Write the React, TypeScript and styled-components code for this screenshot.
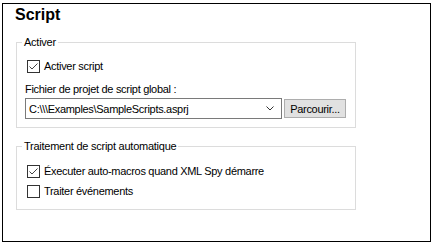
import React from "react";
import styled, { createGlobalStyle } from "styled-components";

const GlobalStyle = createGlobalStyle`
  body {
    margin: 0;
    background: #ffffff;
    font-family: "Liberation Sans", Arial, sans-serif;
    font-size: 11px;
    color: #000000;
  }
`;

const Frame = styled.div`
  box-sizing: border-box;
  width: 429px;
  height: 239px;
  margin: 3px 0 0 2px;
  padding: 1px 0 0 12px;
  border: 1px solid #000000;
  background: #ffffff;
`;

const Title = styled.h1`
  margin: 0;
  height: 20px;
  font-size: 16px;
  line-height: 20px;
  font-weight: 700;
`;

const Group = styled.fieldset<{ $top: number }>`
  box-sizing: border-box;
  width: 340px;
  margin: ${(p) => p.$top}px 0 0 1px;
  padding: 0;
  border: 1px solid #dcdcdc;
  min-inline-size: 0;
`;

const Legend = styled.legend`
  margin-left: 5px;
  padding: 0 2px;
  height: 13px;
  line-height: 13px;
  letter-spacing: -0.25px;
`;

const GroupBody = styled.div<{ $pt: number; $pb: number; $gap: number }>`
  display: flex;
  flex-direction: column;
  gap: ${(p) => p.$gap}px;
  padding: ${(p) => p.$pt}px 0 ${(p) => p.$pb}px 8px;
`;

const CheckRow = styled.label`
  display: flex;
  align-items: center;
  gap: 4px;
  height: 13px;
  margin-left: 2px;
  line-height: 13px;
  letter-spacing: -0.3px;
  white-space: nowrap;
`;

const Box = styled.span`
  box-sizing: border-box;
  display: flex;
  align-items: center;
  justify-content: center;
  width: 13px;
  height: 13px;
  border: 1px solid #333333;
  background: #ffffff;
  flex: none;
`;

const FieldLabel = styled.div`
  height: 13px;
  line-height: 13px;
  margin-top: 10px;
  letter-spacing: -0.3px;
  white-space: nowrap;
`;

const FileRow = styled.div`
  display: flex;
  align-items: center;
  gap: 2px;
  height: 21px;
  margin-top: 2px;
`;

const Combo = styled.div`
  box-sizing: border-box;
  display: flex;
  align-items: center;
  justify-content: space-between;
  width: 257px;
  height: 21px;
  padding: 0 7px 0 3px;
  border: 1px solid #7a7a7a;
  background: #ffffff;
  letter-spacing: -0.3px;
  white-space: nowrap;
`;

const Button = styled.button`
  box-sizing: border-box;
  width: 62px;
  height: 19px;
  padding: 0;
  border: 1px solid #adadad;
  background: #e1e1e1;
  font-family: inherit;
  font-size: 11px;
  letter-spacing: -0.3px;
  color: #000000;
`;

function Check({ checked }: { checked: boolean }) {
  return (
    <Box>
      {checked && (
        <svg width="11" height="11" viewBox="0 0 11 11">
          <polyline
            points="1.5,5.5 4,8 9.5,2.5"
            fill="none"
            stroke="#444444"
            strokeWidth="1"
          />
        </svg>
      )}
    </Box>
  );
}

export default function App() {
  return (
    <>
      <GlobalStyle />
      <Frame>
        <Title>Script</Title>

        <Group $top={11}>
          <Legend>Activer</Legend>
          <GroupBody $pt={11} $pb={8} $gap={0}>
            <CheckRow>
              <Check checked />
              Activer script
            </CheckRow>
            <FieldLabel>Fichier de projet de script global :</FieldLabel>
            <FileRow>
              <Combo>
                <span>C:\\\Examples\SampleScripts.asprj</span>
                <svg width="8" height="5" viewBox="0 0 8 5">
                  <polyline
                    points="0.5,0.5 4,4 7.5,0.5"
                    fill="none"
                    stroke="#333333"
                    strokeWidth="1"
                  />
                </svg>
              </Combo>
              <Button>Parcourir...</Button>
            </FileRow>
          </GroupBody>
        </Group>

        <Group $top={12}>
          <Legend>Traitement de script automatique</Legend>
          <GroupBody $pt={12} $pb={11} $gap={7}>
            <CheckRow>
              <Check checked />
              Éxecuter auto-macros quand XML Spy démarre
            </CheckRow>
            <CheckRow>
              <Check checked={false} />
              Traiter événements
            </CheckRow>
          </GroupBody>
        </Group>
      </Frame>
    </>
  );
}
